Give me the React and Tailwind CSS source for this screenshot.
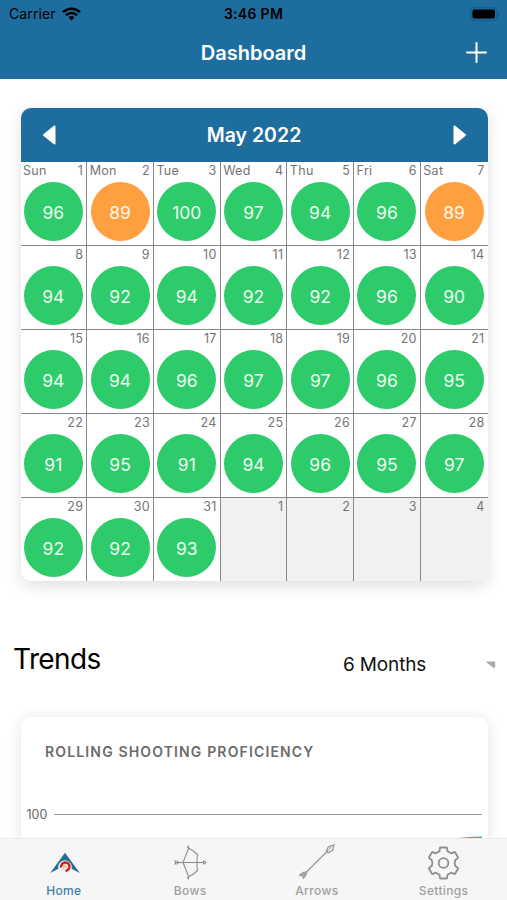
import React from 'react';

const weekdays = ['Sun', 'Mon', 'Tue', 'Wed', 'Thu', 'Fri', 'Sat'];

const weeks = [
  [96, 89, 100, 97, 94, 96, 89],
  [94, 92, 94, 92, 92, 96, 90],
  [94, 94, 96, 97, 97, 96, 95],
  [91, 95, 91, 94, 96, 95, 97],
  [92, 92, 93, null, null, null, null],
];

const StatusBar = () => (
  <div className="grid grid-cols-3 items-center h-[27px] pl-[9px] pr-[7px] text-[14px] text-black">
    <div className="flex items-center gap-[6px]">
      <span className="tracking-[0.1px]">Carrier</span>
      <svg width="19" height="14" viewBox="0 0 19 14" fill="none" stroke="#000" strokeWidth="2.5">
        <path d="M1 5.2a12.2 12.2 0 0 1 17 0" />
        <path d="M4 8.3a7.8 7.8 0 0 1 11 0" />
        <path d="M9.5 13.4 6.6 10.5a4.1 4.1 0 0 1 5.8 0Z" fill="#000" stroke="none" />
      </svg>
    </div>
    <p className="text-center font-semibold tracking-[0.3px] whitespace-nowrap -ml-[2px]">3:46 PM</p>
    <svg className="justify-self-end" width="30" height="14" viewBox="0 0 30 14">
      <rect x="0.7" y="0.7" width="26.2" height="12.6" rx="3.6" fill="none" stroke="#185d8a" strokeWidth="1.3" />
      <rect x="2.4" y="2.4" width="22.6" height="9.2" rx="2" fill="#000" />
      <path d="M28.2 5v4c1.1-.4 1.5-1.1 1.5-2s-.4-1.6-1.5-2Z" fill="#185d8a" />
    </svg>
  </div>
);

const Header = () => (
  <header className="shrink-0 h-[79px] bg-[#1e6d9f]">
    <StatusBar />
    <div className="grid grid-cols-[1fr_auto_1fr] items-center h-[51px] px-5">
      <h1 className="col-start-2 text-[20px] leading-6 font-semibold text-white">Dashboard</h1>
      <svg className="justify-self-end" width="21" height="21" viewBox="0 0 21 21" stroke="#fff" strokeWidth="2" strokeLinecap="round">
        <path d="M10.5 1v19M1 10.5h19" />
      </svg>
    </div>
  </header>
);

const Day = ({ week, col, score }) => {
  const index = week * 7 + col + 1;
  const date = index > 31 ? index - 31 : index;
  const color = score < 90 ? 'bg-[#ffa040]' : 'bg-[#2ecb6b]';

  return (
    <div className={`flex flex-col items-center border-[#88888c] ${col < 6 ? 'border-r' : ''} ${week < 4 ? 'border-b' : ''} ${score === null ? 'bg-[#f1f1f1]' : 'bg-white'}`}>
      <div className="flex justify-between w-full h-[20.4px] pl-[2.5px] pr-[3px] pt-[1px] text-[12.5px] leading-4 tracking-[0.3px] text-[#747474]">
        <span>{week === 0 ? weekdays[col] : ''}</span>
        <span>{date}</span>
      </div>
      {score !== null && (
        <div className={`flex items-center justify-center size-[59px] shrink-0 pt-[1.5px] rounded-full text-[17.5px] text-white/90 ${color}`}>
          {score}
        </div>
      )}
    </div>
  );
};

const Calendar = () => (
  <section className="rounded-[10px] overflow-hidden shadow-[0_5px_16px_rgba(0,0,0,0.13)]">
    <div className="flex items-center justify-between h-[54px] px-[21px] bg-[#1e6d9f]">
      <svg width="14" height="20" viewBox="0 0 14 20" fill="#fff" stroke="#fff" strokeWidth="2" strokeLinejoin="round">
        <path d="M12.5 1.5v17L2 10Z" />
      </svg>
      <h2 className="pt-px text-[19.5px] font-semibold text-white">May 2022</h2>
      <svg width="14" height="20" viewBox="0 0 14 20" fill="#fff" stroke="#fff" strokeWidth="2" strokeLinejoin="round">
        <path d="M1.5 1.5v17L12 10Z" />
      </svg>
    </div>
    <div className="grid grid-cols-7 grid-rows-[84px_84px_84px_84px_83px]">
      {weeks.map((scores, week) => scores.map((score, col) => (
        <Day key={`${week}-${col}`} week={week} col={col} score={score} />
      )))}
    </div>
  </section>
);

const Trends = () => (
  <>
    <div className="flex items-center justify-between mt-[60px] pl-[13px] pr-[11px]">
      <h2 className="text-[28px] leading-9 text-black tracking-[-0.6px]">Trends</h2>
      <div className="flex items-center justify-between w-[153px] pt-[12px]">
        <span className="text-[19px] leading-6 text-[#111] tracking-[-0.15px]">6 Months</span>
        <svg width="10" height="8" viewBox="0 0 10 8" fill="#a9a9a9">
          <path d="M.6 1.6Q0 .6 1.2 .6H8.4Q9.2 .6 9.2 1.4V5.2Q8.8 7.4 7 6.6Z" />
        </svg>
      </div>
    </div>
    <section className="h-[240px] mt-10 ml-[20.5px] mr-[19.5px] pt-[25px] rounded-[10px] bg-white shadow-[0_2px_16px_rgba(0,0,0,0.11)]">
      <h3 className="pl-[24.5px] text-[14px] leading-5 font-semibold tracking-[1.15px] text-[#6b6b6b]">ROLLING SHOOTING PROFICIENCY</h3>
      <div className="flex items-center gap-[7px] mt-[43px] pl-[6px] pr-[6px]">
        <span className="pt-px text-[12.5px] leading-[18px] text-[#666]">100</span>
        <div className="flex-1 h-px bg-[#999]" />
      </div>
      <svg className="ml-auto mr-[6px] mt-[11px]" width="26" height="6" viewBox="0 0 26 6" fill="none" stroke="#35bd74" strokeWidth="2">
        <path d="M0 4.2Q12 2.6 26 2.4" />
      </svg>
    </section>
  </>
);

const HomeIcon = () => (
  <svg className="ml-[3px]" width="30" height="22" viewBox="0 0 30 22">
    <path d="M15 .8 29.8 21 21.6 16.8A6.8 6.8 0 1 0 8.4 16.8L.2 21Z" fill="#226f9a" />
    <path d="M11.2 15.4A4.2 4.2 0 1 1 15.4 18.8" fill="none" stroke="#c9202b" strokeWidth="2.5" />
    <circle cx="14.8" cy="14.3" r="2" fill="#f7c09c" />
    <path d="M12.4 18 14.3 16" stroke="#e08a78" strokeWidth=".8" />
  </svg>
);

const BowIcon = () => (
  <svg width="34" height="37" viewBox="0 0 34 37" fill="none" stroke="#8f8f8f" strokeWidth="1.1">
    <path d="M15 1.5 15.7 4 10 18.5 15.7 33 15 35.5" />
    <path d="M14 3.2Q20 6 24.6 10.5L24 15V22L24.6 26.5Q20 31 14 33.8" />
    <path d="M2 18.5H31" />
    <path d="m1.5 16.5 2 2-2 2M4 16.5l1.5 2-1.5 2M30.5 16.9l2.5 1.6-2.5 1.6Z" />
  </svg>
);

const ArrowIcon = () => (
  <svg className="mb-[2px]" width="38" height="36" viewBox="0 0 38 36" fill="none" stroke="#999" strokeWidth="1.3">
    <path d="M5 31.5 30 6.5" />
    <path d="M36 1 34.7 6.3 30 8.8 28.5 6.4 30.4 2.8Z" />
    <path d="m30 6.5 3.5-3.5" strokeWidth="1" />
    <path d="M9 27.5 8.5 31 5 35V32.5L1 31.5 4.5 28.3Z" fill="#aaa" strokeWidth=".6" />
    <path d="M1.5 30.5 7.5 29M5.5 34.5 7.5 29" strokeWidth="1" />
  </svg>
);

const SettingsIcon = () => (
  <svg className="mr-px" width="33" height="34" viewBox="0 0 34 34" fill="none" stroke="#8e8e8e" strokeWidth="1.9" strokeLinejoin="round">
    <path d="M14 1h6q.6 0 .7.6l.4 3.3 3.7 2.1 3.2-1.3q.6-.2.9.3l3 5.1q.3.5-.2.9l-2.700 2.200q-1 2.800 0 5.600l2.700 2.200q.5.4.2.9l-3 5.100q-.3.5-.9.3l-3.200-1.300-3.700 2.100-.4 3.300q-.1.6-.7.6h-6q-.6 0-.7-.6l-.4-3.300-3.700-2.100-3.200 1.300q-.6.2-.9-.3l-3-5.100q-.3-.5.2-.9l2.700-2.200q1-2.800 0-5.600l-2.700-2.200q-.5-.4-.2-.9l3-5.100q.3-.5.9-.3l3.200 1.300 3.700-2.100.4-3.300q.1-.6.7-.6Z" />
    <circle cx="17" cy="17" r="5" />
  </svg>
);

const tabs = [
  { label: 'Home', icon: HomeIcon, active: true },
  { label: 'Bows', icon: BowIcon },
  { label: 'Arrows', icon: ArrowIcon },
  { label: 'Settings', icon: SettingsIcon },
];

const TabBar = () => (
  <nav className="shrink-0 grid grid-cols-4 h-[62px] border-t border-[#ececec] bg-[#f6f6f6]">
    {tabs.map(({ label, icon: Icon, active }) => (
      <div key={label} className="flex flex-col items-center pt-[3px]">
        <div className="flex items-center justify-center h-[41px]"><Icon /></div>
        <span className={`text-[12px] leading-4 font-medium tracking-[0.35px] ${active ? 'text-[#4180ad] pl-px' : 'text-[#a0a0a0]'}`}>{label}</span>
      </div>
    ))}
  </nav>
);

const App = () => (
  <div className="flex flex-col h-[900px] overflow-hidden bg-white font-['Inter','Liberation_Sans',sans-serif]">
    <Header />
    <main className="flex-1 min-h-0 overflow-hidden">
      <div className="pt-[29px] pl-[20.5px] pr-[19.5px]"><Calendar /></div>
      <Trends />
    </main>
    <TabBar />
  </div>
);

export default App;
